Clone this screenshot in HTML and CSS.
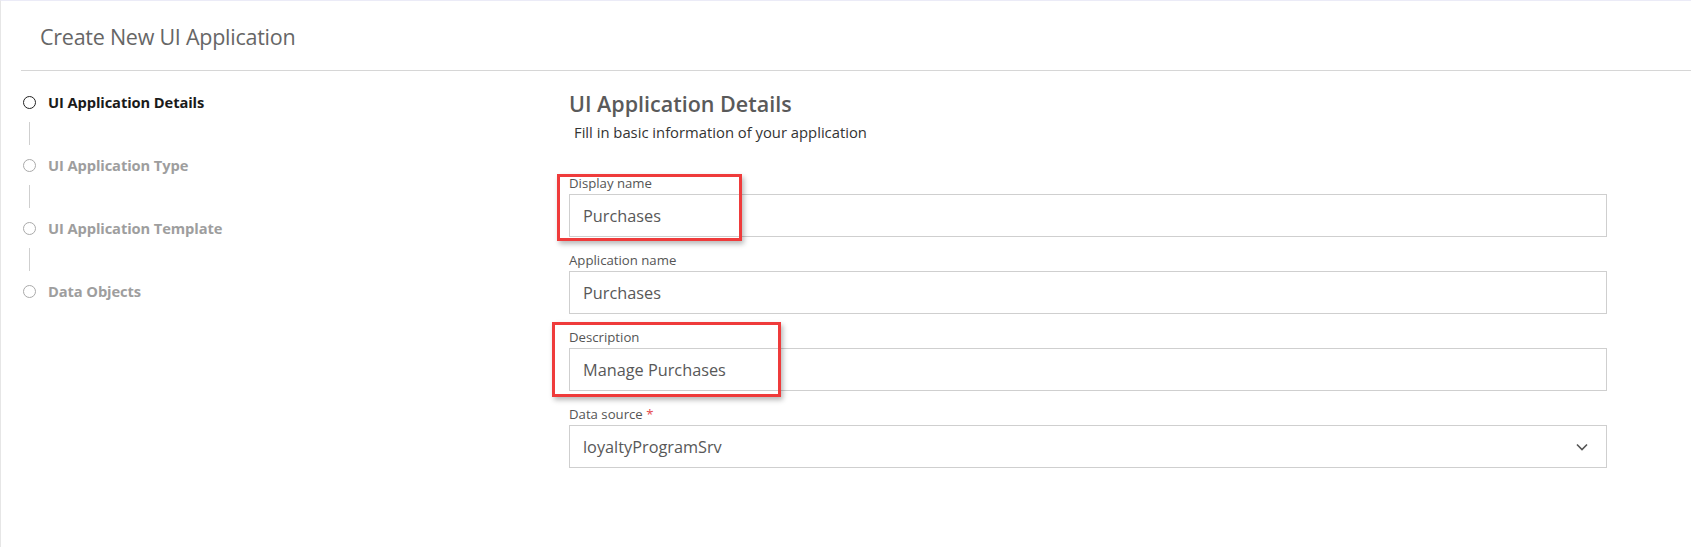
FILE: index.html
```html
<!DOCTYPE html>
<html lang="en">
<head>
<meta charset="utf-8">
<title>Create New UI Application</title>
<link rel="stylesheet" href="styles.css">
</head>
<body>
<div class="page">
  <header class="header">
    <h1 class="title">Create New UI Application</h1>
  </header>
  <main class="main">
    <nav class="steps">
      <div class="step active"><span class="dot"></span><span class="step-label">UI Application Details</span></div>
      <div class="connector"></div>
      <div class="step"><span class="dot"></span><span class="step-label">UI Application Type</span></div>
      <div class="connector"></div>
      <div class="step"><span class="dot"></span><span class="step-label">UI Application Template</span></div>
      <div class="connector"></div>
      <div class="step"><span class="dot"></span><span class="step-label">Data Objects</span></div>
    </nav>
    <section class="form">
      <h2 class="form-title">UI Application Details</h2>
      <p class="form-sub">Fill in basic information of your application</p>
      <div class="fields">
        <div class="field">
          <label class="label">Display name</label>
          <div class="input">Purchases</div>
          <div class="mark mark-display"></div>
        </div>
        <div class="field">
          <label class="label">Application name</label>
          <div class="input">Purchases</div>
        </div>
        <div class="field">
          <label class="label">Description</label>
          <div class="input">Manage Purchases</div>
          <div class="mark mark-desc"></div>
        </div>
        <div class="field">
          <label class="label">Data source <span class="req">*</span></label>
          <div class="input select">
            <span>loyaltyProgramSrv</span>
            <svg class="chev" width="12" height="8" viewBox="0 0 12 8"><path d="M1 1.5 L6 6.5 L11 1.5" fill="none" stroke="#555" stroke-width="1.6"/></svg>
          </div>
        </div>
      </div>
    </section>
  </main>
</div>
</body>
</html>
```

FILE: styles.css
```css
html, body {
  margin: 0;
  padding: 0;
  background: #fff;
}
body {
  font-family: "Open Sans", "Noto Sans", sans-serif;
  color: #555;
}
.page {
  height: 547px;
  box-sizing: border-box;
  border-top: 1px solid #ebebf7;
  border-left: 1px solid #e6e6e6;
}
.header {
  margin-left: 20px;
  padding-left: 19px;
  height: 69px;
  border-bottom: 1px solid #d6d6d6;
  display: flex;
  align-items: flex-start;
}
.title {
  margin: 0;
  padding-top: 21px;
  font-size: 21.5px;
  line-height: 30px;
  font-weight: 400;
  color: #666;
  letter-spacing: -0.25px;
}
.main {
  display: flex;
}
.steps {
  width: 568px;
  flex: none;
  padding: 21px 0 0 22px;
  box-sizing: border-box;
  display: flex;
  flex-direction: column;
}
.step {
  display: flex;
  align-items: center;
  height: 20px;
  gap: 12px;
}
.dot {
  width: 13px;
  height: 13px;
  box-sizing: border-box;
  border-radius: 50%;
  border: 1.5px solid #aaa;
  flex: none;
}
.step.active .dot {
  border-color: #222;
}
.step-label {
  font-size: 14.7px;
  font-weight: 700;
  color: #9e9e9e;
  letter-spacing: -0.1px;
}
.step.active .step-label {
  color: #1a1a1a;
}
.connector {
  width: 1px;
  height: 23px;
  margin: 10px 0 10px 6px;
  background: #cfcfcf;
}
.form {
  width: 1038px;
  flex: none;
  padding-top: 19px;
}
.form-title {
  margin: 0;
  font-size: 21.5px;
  line-height: 27px;
  font-weight: 600;
  color: #5a5a5a;
}
.form-sub {
  margin: 6px 0 0 5px;
  font-size: 14.8px;
  line-height: 19px;
  color: #333;
}
.fields {
  margin-top: 33px;
  display: flex;
  flex-direction: column;
  gap: 15px;
}
.field {
  position: relative;
}
.label {
  display: block;
  font-size: 13.2px;
  line-height: 17px;
  margin-bottom: 2px;
  color: #555;
}
.req {
  color: #e5484d;
}
.input {
  height: 43px;
  box-sizing: border-box;
  border: 1px solid #cfcfcf;
  padding: 0 13px;
  display: flex;
  align-items: center;
  font-size: 16.3px;
  color: #585858;
}
.select {
  justify-content: space-between;
  padding-right: 18px;
}
.chev {
  display: block;
}
.mark {
  position: absolute;
  border: 3px solid #ef3b3b;
  box-shadow: 2px 3px 5px rgba(0, 0, 0, 0.28);
  pointer-events: none;
  box-sizing: border-box;
}
.mark-display {
  left: -12px;
  top: -1px;
  width: 185px;
  height: 67px;
}
.mark-desc {
  left: -17px;
  top: -7px;
  width: 229px;
  height: 75px;
}
```
